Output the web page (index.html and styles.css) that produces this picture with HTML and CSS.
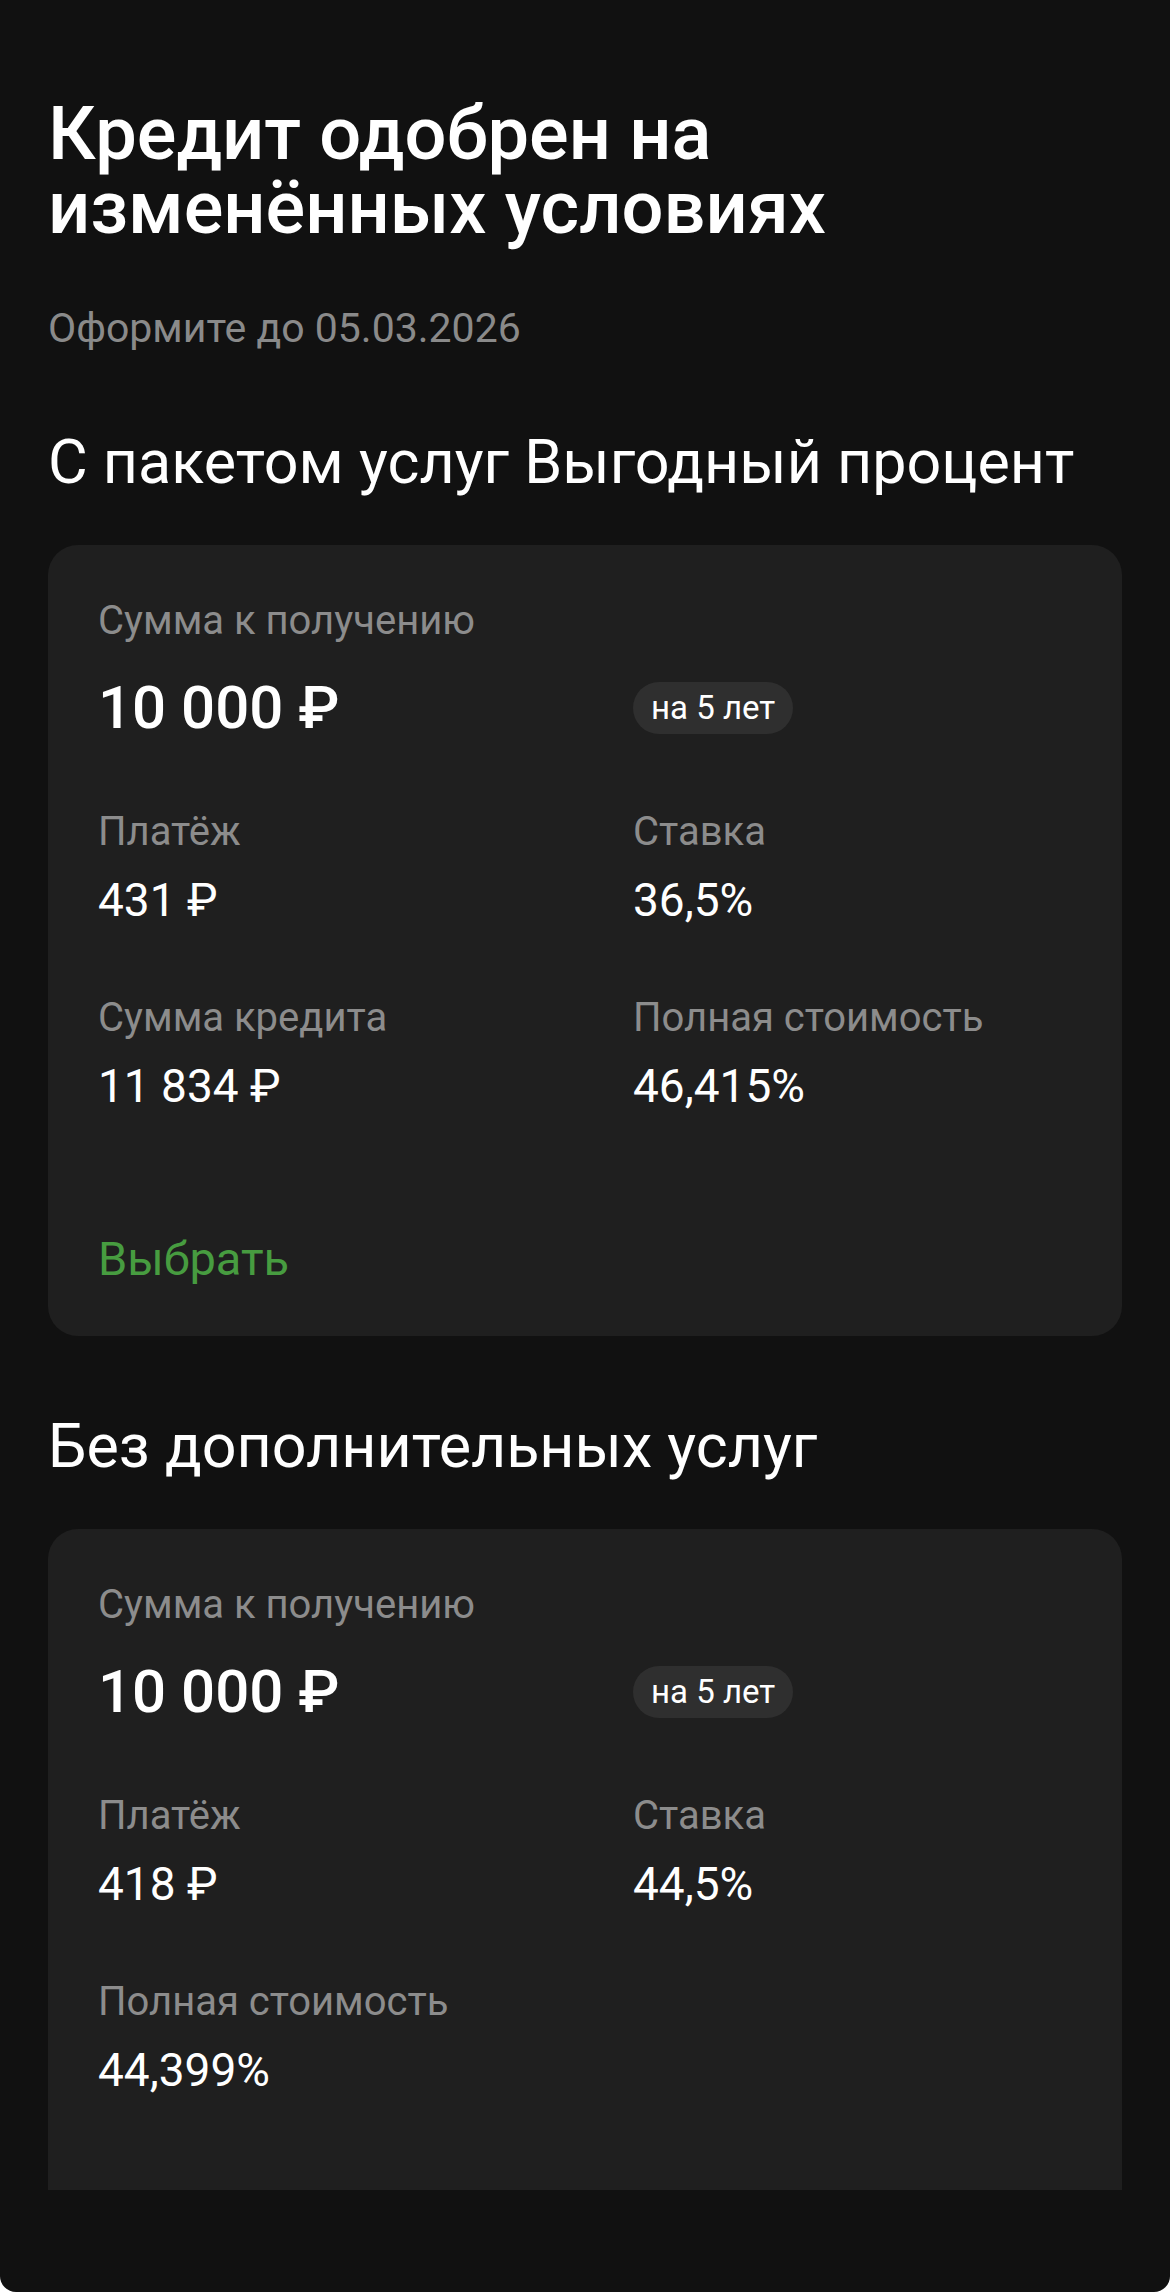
FILE: index.html
```html
<!DOCTYPE html>
<html lang="ru">
<head>
    <meta charset="UTF-8">
    <meta name="viewport" content="width=device-width, initial-scale=1.0">
    <title>Кредит одобрен</title>
    <link rel="stylesheet" href="styles.css">
</head>
<body>
    <div class="screen">
        <!-- Header -->
        <h1 class="title">Кредит одобрен на изменённых условиях</h1>
        <p class="deadline">Оформите до 05.03.2026</p>

        <!-- Offer with package -->
        <h2 class="offer-title">С пакетом услуг Выгодный процент</h2>
        <div class="offer-card">
            <div class="label">Сумма к получению</div>
            <div class="amount-row">
                <div class="amount">10 000 ₽</div>
                <div class="term">на 5 лет</div>
            </div>
            <div class="stats">
                <div class="stat">
                    <div class="label">Платёж</div>
                    <div class="value">431 ₽</div>
                </div>
                <div class="stat">
                    <div class="label">Ставка</div>
                    <div class="value">36,5%</div>
                </div>
                <div class="stat">
                    <div class="label">Сумма кредита</div>
                    <div class="value">11 834 ₽</div>
                </div>
                <div class="stat">
                    <div class="label">Полная стоимость</div>
                    <div class="value">46,415%</div>
                </div>
            </div>
            <a href="#" class="choose">Выбрать</a>
        </div>

        <!-- Offer without services -->
        <h2 class="offer-title">Без дополнительных услуг</h2>
        <div class="offer-card offer-card-cut">
            <div class="label">Сумма к получению</div>
            <div class="amount-row">
                <div class="amount">10 000 ₽</div>
                <div class="term">на 5 лет</div>
            </div>
            <div class="stats">
                <div class="stat">
                    <div class="label">Платёж</div>
                    <div class="value">418 ₽</div>
                </div>
                <div class="stat">
                    <div class="label">Ставка</div>
                    <div class="value">44,5%</div>
                </div>
                <div class="stat">
                    <div class="label">Полная стоимость</div>
                    <div class="value">44,399%</div>
                </div>
            </div>
        </div>
    </div>
</body>
</html>
```

FILE: styles.css
```css
/* Global styles */
body {
    margin: 0;
    background: #fff;
    font-family: 'Roboto', 'Liberation Sans', sans-serif;
    color: #fff;
}

/* Screen container */
.screen {
    background-color: #111111;
    padding: 0 48px 102px;
    border-radius: 0 0 16px 16px;
    overflow: hidden;
}

/* Header */
.title {
    margin: 0;
    padding-top: 97px;
    font-size: 74px;
    line-height: 74px;
    font-weight: 500;
    width: 900px;
}

.deadline {
    margin: 59px 0 0;
    font-size: 41px;
    line-height: 48px;
    color: #8a8a8a;
}

.offer-title {
    margin: 75px 0 48px;
    font-size: 61px;
    line-height: 70px;
    font-weight: 400;
}

/* Card styles */
.offer-card {
    background-color: #1f1f1f;
    border-radius: 30px;
    padding: 52px 50px 51px;
}

.offer-card-cut {
    border-radius: 30px 30px 0 0;
    padding-bottom: 94px;
}

.label {
    font-size: 40px;
    line-height: 48px;
    color: #8c8c8c;
}

.amount-row {
    display: grid;
    grid-template-columns: 535px 1fr;
    align-items: center;
    margin-top: 28px;
}

.amount {
    font-size: 60px;
    line-height: 70px;
    font-weight: 500;
}

.term {
    justify-self: start;
    height: 52px;
    line-height: 52px;
    padding: 0 18px;
    border-radius: 26px;
    background-color: #2f2f2f;
    font-size: 33px;
}

/* Stats grid */
.stats {
    display: grid;
    grid-template-columns: 535px 1fr;
    row-gap: 68px;
    margin-top: 65px;
}

.value {
    margin-top: 18px;
    font-size: 46px;
    line-height: 52px;
}

.choose {
    display: inline-block;
    margin-top: 121px;
    font-size: 47px;
    line-height: 52px;
    color: #479c40;
    text-decoration: none;
}
```
